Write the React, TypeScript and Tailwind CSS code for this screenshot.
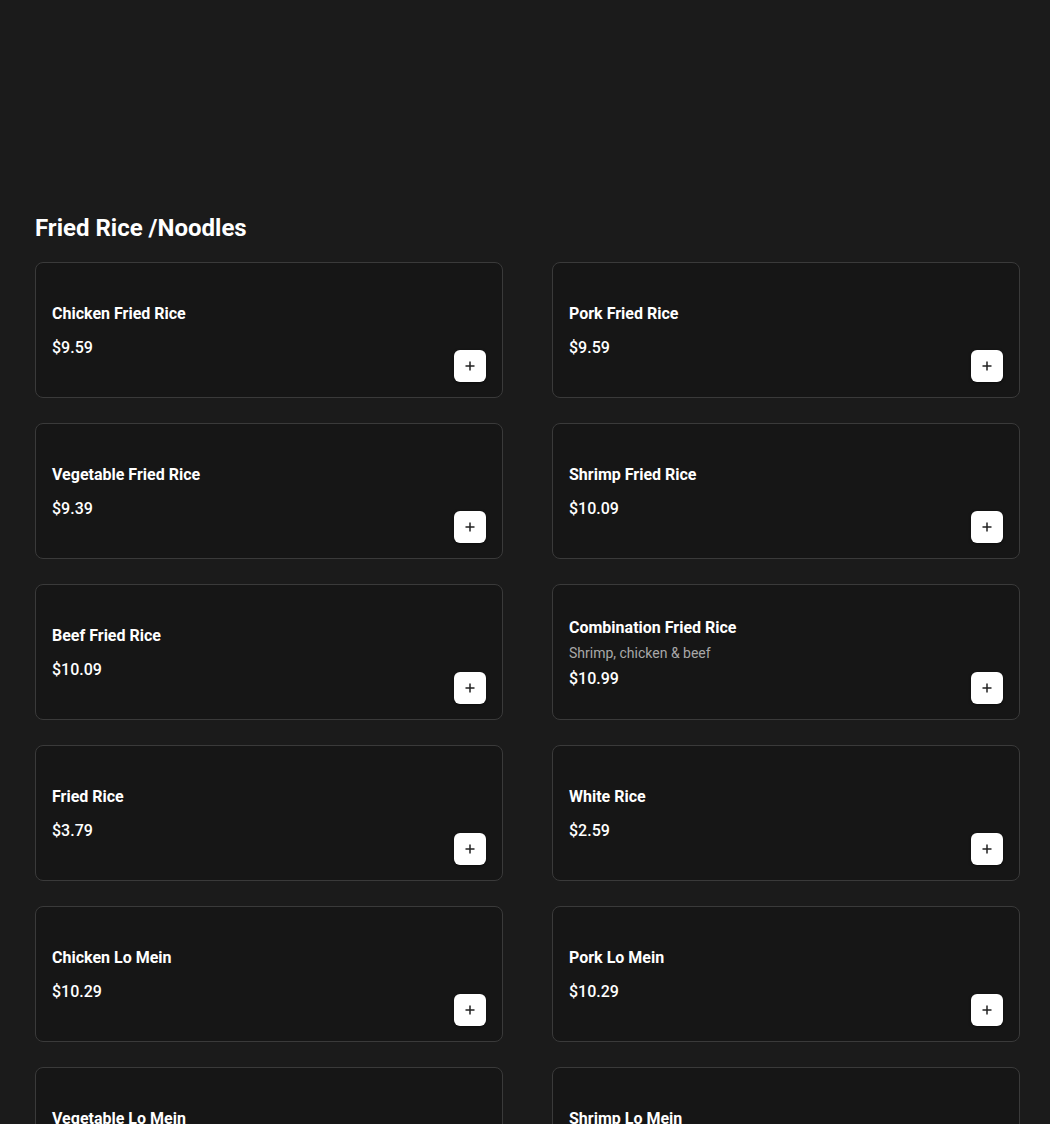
import React from "react";

type Item = { name: string; price: string; desc?: string };

const items: Item[] = [
  { name: "Chicken Fried Rice", price: "$9.59" },
  { name: "Pork Fried Rice", price: "$9.59" },
  { name: "Vegetable Fried Rice", price: "$9.39" },
  { name: "Shrimp Fried Rice", price: "$10.09" },
  { name: "Beef Fried Rice", price: "$10.09" },
  { name: "Combination Fried Rice", price: "$10.99", desc: "Shrimp, chicken & beef" },
  { name: "Fried Rice", price: "$3.79" },
  { name: "White Rice", price: "$2.59" },
  { name: "Chicken Lo Mein", price: "$10.29" },
  { name: "Pork Lo Mein", price: "$10.29" },
  { name: "Vegetable Lo Mein", price: "$10.29" },
  { name: "Shrimp Lo Mein", price: "$10.79" },
];

function Card({ item }: { item: Item }) {
  return (
    <div className="flex h-[136px] rounded-lg border border-[#3a3a3a] bg-[#161616] px-4 pt-[17px] pb-[15px]">
      <div className="flex flex-1 flex-col justify-center">
        <div className="text-[16px] font-bold leading-6 text-white">{item.name}</div>
        {item.desc ? (
          <>
            <div className="mt-[3px] text-[14px] leading-5 text-[#a8a8a8]">{item.desc}</div>
            <div className="mt-[4px] text-[16px] font-medium leading-6 text-white">{item.price}</div>
          </>
        ) : (
          <div className="mt-[10px] text-[16px] font-medium leading-6 text-white">{item.price}</div>
        )}
      </div>
      <div className="flex items-end">
        <button className="flex h-8 w-8 items-center justify-center rounded-md bg-white shadow-[0_1px_3px_rgba(0,0,0,0.5)]">
          <svg width="12" height="12" viewBox="0 0 12 12" fill="none">
            <path d="M6 1.5v9M1.5 6h9" stroke="#222" strokeWidth="1.5" />
          </svg>
        </button>
      </div>
    </div>
  );
}

export default function App() {
  return (
    <div
      className="min-h-[1124px] bg-[#1b1b1b] pl-[35px] pr-[30px] pt-[212px]"
      style={{ fontFamily: "Roboto, 'Liberation Sans', sans-serif" }}
    >
      <h2 className="text-[24px] font-bold leading-8 text-white">Fried Rice /Noodles</h2>
      <div className="mt-[18px] grid grid-cols-2 gap-x-[49px] gap-y-[25px]">
        {items.map((it) => (
          <Card key={it.name} item={it} />
        ))}
      </div>
    </div>
  );
}
